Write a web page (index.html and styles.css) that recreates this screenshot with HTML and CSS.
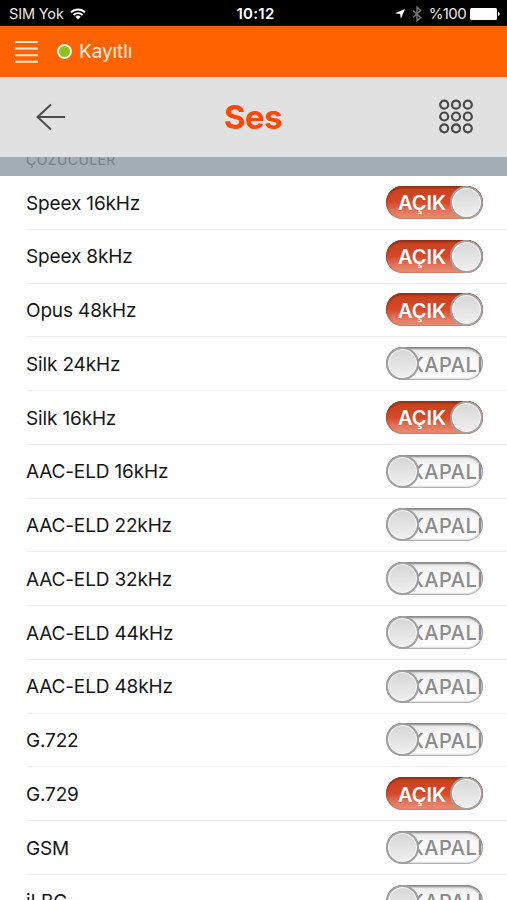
FILE: index.html
```html
<!DOCTYPE html>
<html lang="tr">
<head>
    <meta charset="UTF-8">
    <meta name="viewport" content="width=device-width, initial-scale=1.0">
    <title>Ses</title>
    <link rel="stylesheet" href="styles.css">
</head>

<body>

    <!-- Phone status bar -->
    <div class="status-bar">
        <div class="status-left">
            <span class="carrier">SIM Yok</span>
            <svg class="wifi" width="16" height="12" viewBox="0 0 16 12">
                <path d="M1 4.4 A10 10 0 0 1 15 4.4" fill="none" stroke="#fff" stroke-width="1.9"/>
                <path d="M3.4 7 A6.5 6.5 0 0 1 12.6 7" fill="none" stroke="#fff" stroke-width="1.9"/>
                <path d="M8 11.5 L5.3 8.8 A3.9 3.9 0 0 1 10.7 8.8 Z" fill="#fff"/>
            </svg>
        </div>
        <span class="time">10:12</span>
        <div class="status-right">
            <svg width="10" height="10" viewBox="0 0 10 10">
                <path d="M10 0 L5.9 9.8 L5.1 4.9 L0 4.3 Z" fill="#fff"/>
            </svg>
            <svg class="bluetooth" width="10" height="16" viewBox="0 0 10 16">
                <path d="M1 4.4 L8.6 11.4 L5 14.8 V1.2 L8.6 4.6 L1 11.6" fill="none" stroke="#777" stroke-width="1.4"/>
            </svg>
            <span class="percent">%100</span>
            <svg width="30" height="12" viewBox="0 0 30 12">
                <rect x="0" y="0" width="27" height="12" rx="1.5" fill="#fff"/>
                <path d="M28 4 Q29.8 4.4 29.8 6 Q29.8 7.6 28 8 Z" fill="#fff"/>
            </svg>
        </div>
    </div>

    <!-- Registration bar -->
    <div class="top-bar">
        <svg width="23" height="24" viewBox="0 0 23 24">
            <path d="M0 2 H23 M0 8.6 H23 M0 15.2 H23 M0 21.8 H23" stroke="#ffe9d5" stroke-width="2"/>
        </svg>
        <span class="dot"></span>
        <span class="registered">Kayıtlı</span>
    </div>

    <!-- Page title -->
    <div class="header">
        <svg width="30" height="28" viewBox="0 0 30 28">
            <path d="M29 14 H2 M15 1.5 L1.5 14 L15 26.5" fill="none" stroke="#4d4d4d" stroke-width="2"/>
        </svg>
        <h1>Ses</h1>
        <svg width="36" height="36" viewBox="0 0 36 36">
            <g fill="none" stroke="#484848" stroke-width="2.2">
                <circle cx="6.2" cy="5.7" r="4"/>
                <circle cx="18" cy="5.7" r="4"/>
                <circle cx="29.8" cy="5.7" r="4"/>
                <circle cx="6.2" cy="17.5" r="4"/>
                <circle cx="18" cy="17.5" r="4"/>
                <circle cx="29.8" cy="17.5" r="4"/>
                <circle cx="6.2" cy="29.3" r="4"/>
                <circle cx="18" cy="29.3" r="4"/>
                <circle cx="29.8" cy="29.3" r="4"/>
            </g>
        </svg>
    </div>

    <!-- Codec list, scrolled under the header -->
    <div class="section-title"><span>ÇÖZÜCÜLER</span></div>
    <div class="codec-list">
        <div class="row"><span class="name">Speex 16kHz</span><div class="switch on"><span class="label">AÇIK</span><span class="knob"></span></div></div>
        <div class="row"><span class="name">Speex 8kHz</span><div class="switch on"><span class="label">AÇIK</span><span class="knob"></span></div></div>
        <div class="row"><span class="name">Opus 48kHz</span><div class="switch on"><span class="label">AÇIK</span><span class="knob"></span></div></div>
        <div class="row"><span class="name">Silk 24kHz</span><div class="switch off"><span class="knob"></span><span class="label">KAPALI</span></div></div>
        <div class="row"><span class="name">Silk 16kHz</span><div class="switch on"><span class="label">AÇIK</span><span class="knob"></span></div></div>
        <div class="row"><span class="name">AAC-ELD 16kHz</span><div class="switch off"><span class="knob"></span><span class="label">KAPALI</span></div></div>
        <div class="row"><span class="name">AAC-ELD 22kHz</span><div class="switch off"><span class="knob"></span><span class="label">KAPALI</span></div></div>
        <div class="row"><span class="name">AAC-ELD 32kHz</span><div class="switch off"><span class="knob"></span><span class="label">KAPALI</span></div></div>
        <div class="row"><span class="name">AAC-ELD 44kHz</span><div class="switch off"><span class="knob"></span><span class="label">KAPALI</span></div></div>
        <div class="row"><span class="name">AAC-ELD 48kHz</span><div class="switch off"><span class="knob"></span><span class="label">KAPALI</span></div></div>
        <div class="row"><span class="name">G.722</span><div class="switch off"><span class="knob"></span><span class="label">KAPALI</span></div></div>
        <div class="row"><span class="name">G.729</span><div class="switch on"><span class="label">AÇIK</span><span class="knob"></span></div></div>
        <div class="row"><span class="name">GSM</span><div class="switch off"><span class="knob"></span><span class="label">KAPALI</span></div></div>
        <div class="row"><span class="name">iLBC</span><div class="switch off"><span class="knob"></span><span class="label">KAPALI</span></div></div>
    </div>

</body>
</html>
```
FILE: styles.css
```css
* {
    box-sizing: border-box;
}
body {
    margin: 0;
    height: 900px;
    overflow: hidden;
    display: flex;
    flex-direction: column;
    font-family: Inter, "Liberation Sans", sans-serif;
    background-color: #fff;
    color: #161616;
}
svg {
    display: block;
    flex-shrink: 0;
}
.status-bar {
    flex: none;
    display: grid;
    grid-template-columns: 1fr auto 1fr;
    align-items: center;
    height: 26px;
    padding: 2px 7px 0 9px;
    background-color: #000;
    color: #e8e8e8;
    font-size: 15px;
    line-height: 24px;
}
.status-left, .status-right {
    display: flex;
    align-items: center;
}
.carrier {
    width: 55px;
    white-space: nowrap;
    font-size: 14.5px;
    letter-spacing: -0.15px;
}
.wifi {
    margin-left: 6px;
}
.time {
    padding-left: 2px;
    color: #fff;
    font-weight: 600;
    letter-spacing: 0.3px;
}
.status-right {
    justify-content: flex-end;
}
.bluetooth {
    margin: 0 7px 0 7px;
}
.percent {
    margin-right: 4px;
    letter-spacing: -0.6px;
}
.top-bar {
    flex: none;
    display: flex;
    align-items: center;
    height: 51px;
    padding-left: 15px;
    background-color: #ff6200;
    color: #fff0e0;
}
.dot {
    width: 15px;
    height: 15px;
    margin: 0 7px 0 19px;
    border: 2.5px solid #fff4dc;
    border-radius: 50%;
    background-color: #8dc21f;
}
.registered {
    font-size: 19px;
    letter-spacing: -0.1px;
}
.header {
    flex: none;
    display: flex;
    align-items: center;
    justify-content: space-between;
    height: 80px;
    padding: 0 33px 0 36px;
    background-color: #e1e1e1;
}
h1 {
    margin: 0 0 0 2px;
    color: #ff4808;
    font-size: 33px;
    font-weight: 700;
    letter-spacing: -0.5px;
}
.section-title {
    flex: none;
    height: 19px;
    padding-left: 26px;
    overflow: hidden;
    background-color: #a2adb5;
    color: #78828a;
    font-size: 14px;
    letter-spacing: 0.4px;
    line-height: 18px;
}
.section-title span {
    display: block;
    margin-top: -6px;
}
.row {
    display: flex;
    align-items: center;
    justify-content: space-between;
    height: 53.75px;
    margin-left: 26px;
    padding-right: 24px;
    border-bottom: 1.5px solid #ededef;
}
.name {
    padding-top: 1.5px;
    font-size: 19px;
    letter-spacing: -0.15px;
}
.switch {
    position: relative;
    display: flex;
    align-items: center;
    width: 97px;
    height: 33px;
    border-radius: 17px;
    overflow: hidden;
    font-size: 20px;
}
.on {
    justify-content: space-between;
    background: linear-gradient(#c8401c, #d5492a 50%, #e2745a 75%, #e89078);
    box-shadow: inset 0 2px 2px #8e3018, inset 0 0 2px #a54a34;
    color: #fff;
}
.label {
    padding-top: 2px;
}
.on .label {
    padding-left: 12px;
    font-weight: 600;
}
.off {
    background: linear-gradient(#e6e6e6, #f7f7f7 30%, #fdfdfd);
    box-shadow: inset 0 2px 2px #8a8a8a, inset 0 0 2px 1px #999;
    color: #8b8b8b;
}
.off .label {
    margin-left: -9px;
    font-weight: 500;
    letter-spacing: 0.5px;
}
.knob {
    position: relative;
    z-index: 1;
    flex: none;
    width: 33px;
    height: 33px;
    border: 2px solid #a0a0a0;
    border-radius: 50%;
    background: linear-gradient(#d6d6d6, #f0f0f0);
    box-shadow: inset 0 0 1px 1px #f8f8f8;
}
```
